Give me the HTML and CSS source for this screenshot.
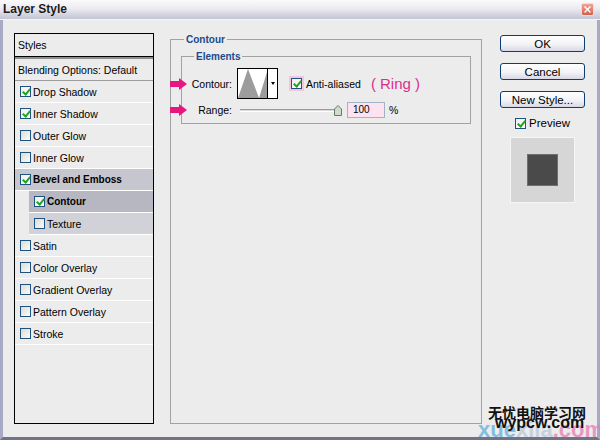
FILE: index.html
```html
<!DOCTYPE html>
<html lang="en">
<head>
  <meta charset="UTF-8">
  <title>Layer Style</title>
  <link rel="stylesheet" href="styles.css">
</head>
<body>
  <div class="dialog">
    <div class="titlebar">
      <span class="title">Layer Style</span>
      <span class="close">
        <svg width="7" height="7" viewBox="0 0 7 7"><path d="M0.5 0.5 L6.5 6.5 M6.5 0.5 L0.5 6.5" stroke="#fff" stroke-width="1.4"/></svg>
      </span>
    </div>

    <div class="frame">
      <!-- left list of effects -->
      <div class="styles-panel">
        <div class="panel-head">Styles</div>
        <div class="panel-rule"></div>
        <div class="style-row blend">Blending Options: Default</div>
        <div class="style-row"><span class="cb on"></span>Drop Shadow</div>
        <div class="style-row"><span class="cb on"></span>Inner Shadow</div>
        <div class="style-row"><span class="cb"></span>Outer Glow</div>
        <div class="style-row"><span class="cb"></span>Inner Glow</div>
        <div class="style-row active"><span class="cb on"></span>Bevel and Emboss</div>
        <div class="style-row sub selected"><span class="cb on"></span>Contour</div>
        <div class="style-row sub"><span class="cb"></span>Texture</div>
        <div class="style-row"><span class="cb"></span>Satin</div>
        <div class="style-row"><span class="cb"></span>Color Overlay</div>
        <div class="style-row"><span class="cb"></span>Gradient Overlay</div>
        <div class="style-row"><span class="cb"></span>Pattern Overlay</div>
        <div class="style-row"><span class="cb"></span>Stroke</div>
      </div>

      <!-- settings -->
      <fieldset class="group">
        <legend>Contour</legend>
        <fieldset class="group inner">
          <legend>Elements</legend>

          <div class="field-row">
            <svg class="mark" width="17" height="12" viewBox="0 0 17 12"><path d="M0 3 H9 V0 L17 6 L9 12 V9 H0 Z" fill="#e8167f"/></svg>
            <span class="label">Contour:</span>
            <div class="picker">
              <svg width="29" height="29" viewBox="0 0 29 29">
                <rect width="29" height="29" fill="#fff"/>
                <polygon points="0,29 10,0 21,29" fill="#9c9c9c"/>
                <polygon points="21,29 29,3 29,29" fill="#9c9c9c"/>
              </svg>
              <div class="picker-drop"><span class="caret"></span></div>
            </div>
            <span class="aa"><span class="cb on"></span></span>
            <span>Anti-aliased</span>
            <span class="note">( Ring )</span>
          </div>

          <div class="field-row range">
            <svg class="mark" width="17" height="12" viewBox="0 0 17 12"><path d="M0 3 H9 V0 L17 6 L9 12 V9 H0 Z" fill="#e8167f"/></svg>
            <span class="label">Range:</span>
            <div class="slider">
              <div class="track"></div>
              <svg class="thumb" width="8" height="11" viewBox="0 0 8 11"><path d="M0.5 4 L4 0.5 L7.5 4 V10.5 H0.5 Z" fill="#cfdccc" stroke="#5f7f5f"/></svg>
            </div>
            <div class="num">100</div>
            <span class="pct">%</span>
          </div>
        </fieldset>
      </fieldset>

      <!-- buttons and preview -->
      <div class="actions">
        <div class="btn">OK</div>
        <div class="btn">Cancel</div>
        <div class="btn">New Style...</div>
        <div class="preview"><span class="cb on"></span>Preview</div>
        <div class="swatch"><div class="swatch-inner"></div></div>
      </div>
    </div>

    <div class="watermark">
      <div class="wm-faint"><span class="wm-blue">xue</span><span class="wm-mid">xila</span><span class="wm-pink">.com</span></div>
      <div class="wm-cn">无忧电脑学习网</div>
      <div class="wm-en">wypcw.com</div>
    </div>
  </div>
</body>
</html>
```

FILE: styles.css
```css
* {
  box-sizing: border-box;
}

body {
  margin: 0;
  font-family: "Liberation Sans", Arial, sans-serif;
  font-size: 10.5px;
  color: #000;
  background: #ececec;
}

.dialog {
  position: relative;
  width: 600px;
  height: 440px;
  display: flex;
  flex-direction: column;
  overflow: hidden;
}

.titlebar {
  height: 20px;
  display: flex;
  align-items: center;
  justify-content: space-between;
  padding: 0 6px 1px 3px;
  background: linear-gradient(#fbfbfd, #ebebf1 45%, #c3c4d4);
  border-bottom: 1px solid #f4f4f7;
}

.title {
  font-weight: bold;
  font-size: 12px;
  color: #1c1c1c;
}

.close {
  width: 13px;
  height: 13px;
  border: 1px solid #f3dcd6;
  border-radius: 2px;
  background: linear-gradient(#f2a393, #d45f4a);
  display: flex;
  align-items: center;
  justify-content: center;
}

.frame {
  flex: 1;
  display: flex;
  padding: 13px 12px 0 11px;
  border: 3px solid #a7a9c5;
  border-top: 0;
  border-bottom-color: #707386;
  background: #ececec;
}

/* styles list */
.styles-panel {
  width: 140px;
  height: 391px;
  flex-shrink: 0;
  margin-right: 16px;
  border: 1px solid #000;
  background: #ececec;
}

.panel-head {
  height: 23px;
  line-height: 23px;
  padding-left: 3px;
  border-bottom: 1px solid #000;
}

.panel-rule {
  height: 2px;
  background: #8e8e8e;
}

.style-row {
  height: 22px;
  display: flex;
  align-items: center;
  padding-left: 5px;
  border-bottom: 1px solid #fff;
}

.style-row .cb {
  margin-right: 2px;
}

.style-row.blend {
  padding-left: 3px;
  border-bottom-color: #9c9c9c;
}

.style-row.active {
  background: #c6c7ce;
  font-weight: bold;
  font-size: 10px;
}

.style-row.sub {
  margin-left: 14px;
  background: #d1d2d7;
}

.style-row.selected {
  background: #b6b7c1;
  font-weight: bold;
  font-size: 10px;
}

.cb {
  position: relative;
  display: inline-block;
  width: 11px;
  height: 11px;
  flex-shrink: 0;
  border: 1px solid #1d5281;
  background: linear-gradient(135deg, #dcdcd4, #fbfbf9);
}

.cb.on {
  background: linear-gradient(135deg, #eeeeea, #fff);
}

.cb.on::after {
  content: "";
  position: absolute;
  left: 3px;
  top: 0;
  width: 3px;
  height: 6px;
  border: solid #22a322;
  border-width: 0 2px 2px 0;
  transform: rotate(40deg);
}

/* contour group */
.group {
  width: 312px;
  height: 391px;
  flex-shrink: 0;
  margin: 0 18px 0 0;
  padding: 4px 10px 0;
  border: 1px solid #a2a2a2;
  min-width: 0;
}

.group legend {
  margin-left: 3px;
  padding: 0 2px;
  font-weight: bold;
  font-size: 10px;
  line-height: 13px;
  color: #1b4a8c;
}

.group.inner {
  width: 290px;
  height: auto;
  margin: 0;
  padding: 5px 8px 5px;
}

.group.inner legend {
  margin-left: 4px;
}

.field-row {
  position: relative;
  display: flex;
  align-items: center;
  height: 31px;
}

.field-row.range {
  height: 16px;
  margin-top: 3px;
}

.mark {
  position: absolute;
  left: -20px;
  top: 50%;
  margin-top: -6px;
}

.label {
  width: 42px;
  text-align: right;
}

.picker {
  display: flex;
  width: 41px;
  height: 31px;
  margin-left: 5px;
  border: 1px solid #000;
  background: #fff;
}

.picker-drop {
  width: 10px;
  border-left: 1px solid #000;
  display: flex;
  align-items: center;
  justify-content: center;
}

.caret {
  border-left: 2.5px solid transparent;
  border-right: 2.5px solid transparent;
  border-top: 3px solid #000;
}

.aa {
  display: flex;
  align-items: center;
  justify-content: center;
  width: 15px;
  height: 15px;
  margin: 0 2px 0 11px;
  background: #f1c6de;
}

.note {
  margin-left: 10px;
  font-size: 15px;
  color: #dc2f8d;
}

.slider {
  display: flex;
  align-items: center;
  width: 102px;
  margin-left: 8px;
}

.track {
  width: 96px;
  height: 3px;
  border-top: 1px solid #9c9c9c;
  border-bottom: 1px solid #fff;
  background: #dadada;
}

.thumb {
  margin-left: -2px;
}

.num {
  width: 38px;
  height: 16px;
  margin-left: 5px;
  padding-left: 5px;
  border: 1px solid #a3b2c4;
  background: #fde3ef;
  font-size: 10px;
  line-height: 14px;
}

.pct {
  margin-left: 4px;
}

/* right column */
.actions {
  width: 85px;
  flex-shrink: 0;
  display: flex;
  flex-direction: column;
  align-items: center;
  padding-top: 2px;
}

.btn {
  width: 85px;
  height: 17px;
  display: flex;
  align-items: center;
  justify-content: center;
  border: 1px solid #0e3c75;
  border-radius: 3px;
  background: linear-gradient(#fff, #f3f3f7 55%, #d7d8e4);
  font-size: 11.5px;
}

.btn + .btn {
  margin-top: 11px;
}

.preview {
  display: flex;
  align-items: center;
  gap: 3px;
  height: 12px;
  margin-top: 9px;
  font-size: 11.5px;
}

.swatch {
  width: 65px;
  height: 66px;
  margin-top: 8px;
  display: flex;
  align-items: center;
  justify-content: center;
  background: #d6d6d6;
  border: 1px solid #f6f6f6;
}

.swatch-inner {
  width: 31px;
  height: 32px;
  background: #4a4a4a;
  border: 1px solid #6e6e6e;
}

/* site watermark over the corner */
.watermark {
  position: absolute;
  left: 478px;
  top: 403px;
  width: 122px;
  height: 37px;
}

.wm-faint {
  position: absolute;
  left: 0;
  top: 16px;
  font-size: 22px;
  font-weight: bold;
  line-height: 22px;
  opacity: 0.75;
}

.wm-blue {
  color: #62aee0;
}

.wm-mid {
  color: #b9c9dc;
}

.wm-pink {
  color: #e87bb4;
}

.wm-cn {
  position: absolute;
  left: 10px;
  top: 1px;
  font-family: "Noto Sans CJK SC", sans-serif;
  font-size: 14px;
  font-weight: bold;
  line-height: 16px;
  color: #111;
}

.wm-en {
  position: absolute;
  left: 17px;
  top: 12px;
  font-size: 16px;
  font-weight: bold;
  line-height: 16px;
  color: #111;
}
```
